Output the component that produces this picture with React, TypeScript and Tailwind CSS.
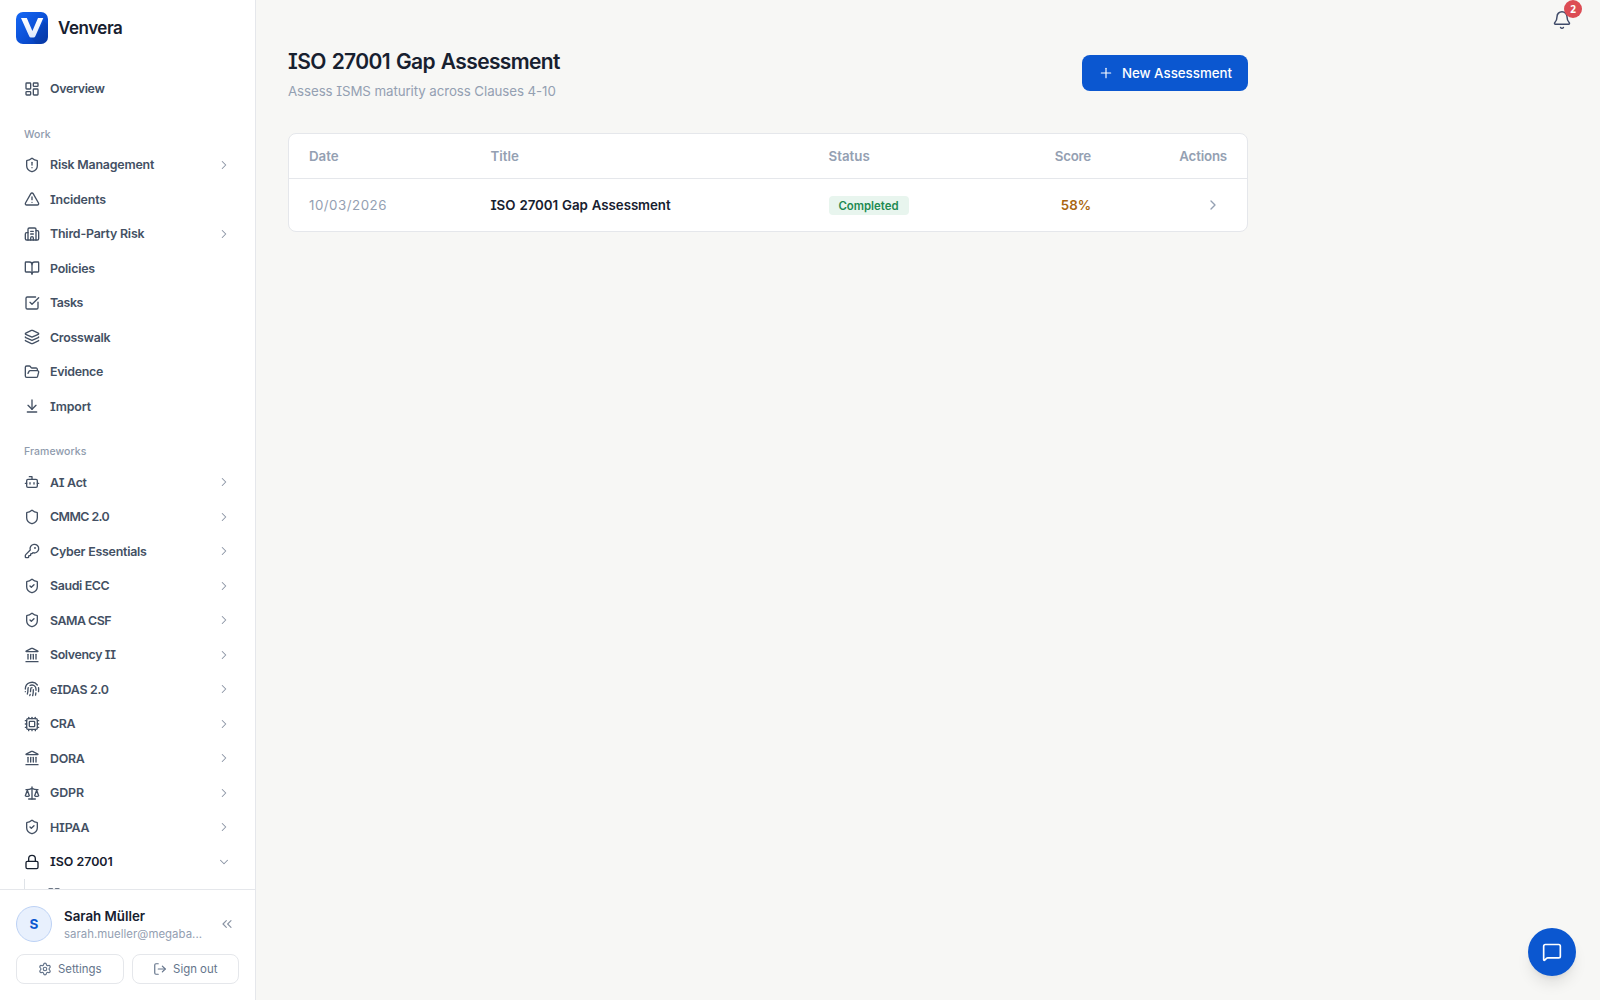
import React from 'react';
import {
  ArrowDownToLine,
  Bell,
  BookOpen,
  Bot,
  Building2,
  ChevronDown,
  ChevronRight,
  ChevronsLeft,
  Cpu,
  Fingerprint,
  FolderOpen,
  KeyRound,
  Landmark,
  Layers,
  LayoutDashboard,
  Lock,
  LogOut,
  MessageSquare,
  Plus,
  Scale,
  Settings,
  Shield,
  ShieldAlert,
  ShieldCheck,
  SquareCheckBig,
  TriangleAlert,
  type LucideIcon,
} from 'lucide-react';

type NavEntry = {
  label: string;
  icon: LucideIcon;
  spacing: string;
  expandable?: boolean;
  open?: boolean;
};

const workItems: NavEntry[] = [
  { label: 'Risk Management', icon: ShieldAlert, spacing: 'tracking-[-0.016em]', expandable: true },
  { label: 'Incidents', icon: TriangleAlert, spacing: 'tracking-[-0.015em]' },
  { label: 'Third-Party Risk', icon: Building2, spacing: 'tracking-[-0.016em]', expandable: true },
  { label: 'Policies', icon: BookOpen, spacing: 'tracking-[-0.016em]' },
  { label: 'Tasks', icon: SquareCheckBig, spacing: 'tracking-[-0.034em]' },
  { label: 'Crosswalk', icon: Layers, spacing: 'tracking-[-0.022em]' },
  { label: 'Evidence', icon: FolderOpen, spacing: 'tracking-[-0.022em]' },
  { label: 'Import', icon: ArrowDownToLine, spacing: 'tracking-[-0.01em]' },
];

const frameworkItems: NavEntry[] = [
  { label: 'AI Act', icon: Bot, spacing: 'tracking-[-0.022em]', expandable: true },
  { label: 'CMMC 2.0', icon: Shield, spacing: 'tracking-[-0.046em]', expandable: true },
  { label: 'Cyber Essentials', icon: KeyRound, spacing: 'tracking-[-0.019em]', expandable: true },
  { label: 'Saudi ECC', icon: ShieldCheck, spacing: 'tracking-[-0.03em]', expandable: true },
  { label: 'SAMA CSF', icon: ShieldCheck, spacing: 'tracking-[-0.04em]', expandable: true },
  { label: 'Solvency II', icon: Landmark, spacing: 'tracking-[-0.031em]', expandable: true },
  { label: 'eIDAS 2.0', icon: Fingerprint, spacing: 'tracking-[-0.021em]', expandable: true },
  { label: 'CRA', icon: Cpu, spacing: 'tracking-[-0.033em]', expandable: true },
  { label: 'DORA', icon: Landmark, spacing: 'tracking-[-0.022em]', expandable: true },
  { label: 'GDPR', icon: Scale, spacing: 'tracking-[-0.006em]', expandable: true },
  { label: 'HIPAA', icon: ShieldCheck, spacing: 'tracking-[-0.012em]', expandable: true },
  { label: 'ISO 27001', icon: Lock, spacing: 'tracking-[0em]', expandable: true, open: true },
];

const NavRow: React.FC<{ item: NavEntry }> = ({ item }) => {
  const Icon = item.icon;
  const Chevron = item.open ? ChevronDown : ChevronRight;
  return (
    <a
      className={`flex h-[33.5px] shrink-0 items-center gap-2.5 rounded-md px-3 text-[12.4px] font-semibold ${
        item.open ? 'text-[#17202f]' : 'text-[#435063]'
      }`}
    >
      <Icon size={16} strokeWidth={2} className="shrink-0" />
      <span className={`flex-1 pt-0.5 whitespace-nowrap ${item.spacing}`}>{item.label}</span>
      {item.expandable && <Chevron size={14} strokeWidth={1.8} className="shrink-0 text-[#8a94a4]" />}
    </a>
  );
};

const NavSection: React.FC<{ title: string; items: NavEntry[] }> = ({ title, items }) => (
  <div className="mt-4 flex flex-col gap-px">
    <div className="flex h-[25.5px] items-start px-3 pt-[5px] text-[10.5px] leading-[16.5px] font-medium tracking-[0.005em] text-[#8f9bad]">
      {title}
    </div>
    {items.map((item) => (
      <NavRow key={item.label} item={item} />
    ))}
  </div>
);

const Logo: React.FC = () => (
  <svg width="32" height="32" viewBox="0 0 32 32">
    <defs>
      <linearGradient id="logoBg" x1="0" y1="0" x2="1" y2="1">
        <stop offset="0" stopColor="#1668f5" />
        <stop offset="0.55" stopColor="#0a4fd6" />
        <stop offset="1" stopColor="#0638a8" />
      </linearGradient>
      <linearGradient id="logoMark" x1="0" y1="0" x2="0" y2="1">
        <stop offset="0" stopColor="#ffffff" />
        <stop offset="1" stopColor="#dfe9fb" />
      </linearGradient>
    </defs>
    <rect width="32" height="32" rx="7" fill="url(#logoBg)" />
    <path d="M15 25.5h4L28 9l3.5 4V25a7 7 0 0 1-7 7h-4z" fill="#06338f" opacity="0.25" />
    <path d="M5 6h5.8l5.6 13L22 6h5.3l-8 18.3q-.6 1.2-1.8 1.2h-2.6q-1.2 0-1.7-1.2z" fill="url(#logoMark)" />
  </svg>
);

const Sidebar: React.FC = () => (
  <aside className="flex w-64 shrink-0 flex-col border-r border-[#e5e7eb] bg-white">
    <div className="flex h-14 shrink-0 items-center gap-2.5 px-4">
      <Logo />
      <span className="pt-0.5 text-[17px] font-semibold tracking-[-0.028em] text-[#17202f]">Venvera</span>
    </div>

    <nav className="flex min-h-0 flex-1 flex-col overflow-hidden px-3 pt-4">
      <NavRow item={{ label: 'Overview', icon: LayoutDashboard, spacing: 'tracking-[-0.026em]' }} />
      <NavSection title="Work" items={workItems} />
      <NavSection title="Frameworks" items={frameworkItems} />
      <div className="ml-3 shrink-0 border-l border-[#dfe3e8] pl-2.5">
        <div className="flex h-[30px] items-center gap-[7px] px-3 text-[11.5px] font-medium text-[#3c4a5e]">
          <LayoutDashboard size={14} strokeWidth={2} />
          <span className="pt-0.5">Dashboard</span>
        </div>
      </div>
    </nav>

    <div className="shrink-0 border-t border-[#e5e7eb] p-4">
      <div className="flex items-center gap-3">
        <div className="flex size-9 shrink-0 items-center justify-center rounded-full border border-[#bdd2f5] bg-[#e8f0fd] text-[13.5px] font-bold text-[#0b57d0]">
          S
        </div>
        <div className="min-w-0 flex-1">
          <div className="text-[13.3px] leading-[19px] font-semibold text-[#17202f]">Sarah Müller</div>
          <div className="-mb-px text-[11.4px] leading-[17px] tracking-[0.003em] whitespace-nowrap text-[#94a0b2]">
            sarah.mueller@megaba...
          </div>
        </div>
        <ChevronsLeft size={16} strokeWidth={1.75} className="mr-1 shrink-0 text-[#8a94a4]" />
      </div>
      <div className="mt-3 flex gap-2">
        <button className="flex h-[30px] flex-1 items-center justify-center gap-1.5 rounded-lg border border-[#e5e7eb] text-[11.4px] text-[#64748b]">
          <Settings size={14} strokeWidth={2} />
          <span className="pt-0.5">Settings</span>
        </button>
        <button className="flex h-[30px] flex-1 items-center justify-center gap-1.5 rounded-lg border border-[#e5e7eb] text-[11.4px] text-[#64748b]">
          <LogOut size={14} strokeWidth={2} />
          <span className="pt-0.5">Sign out</span>
        </button>
      </div>
    </div>
  </aside>
);

const AssessmentTable: React.FC = () => (
  <div className="mt-8 overflow-hidden rounded-lg border border-[#e5e7eb] bg-white">
    <table className="w-full table-fixed text-[13.3px]">
      <colgroup>
        <col className="w-[181.5px]" />
        <col className="w-[338px]" />
        <col className="w-[180px]" />
        <col className="w-[122.5px]" />
        <col className="w-[136px]" />
      </colgroup>
      <thead>
        <tr className="h-[44px] border-b border-[#e5e7eb] text-left text-[#94a0b2]">
          <th className="px-5 pt-0.5 font-semibold">Date</th>
          <th className="px-5 pt-0.5 font-semibold">Title</th>
          <th className="px-5 pt-0.5 font-semibold">Status</th>
          <th className="px-5 pt-0.5 text-right font-semibold tracking-[-0.017em]">Score</th>
          <th className="px-5 pt-0.5 text-right font-semibold tracking-[-0.013em]">Actions</th>
        </tr>
      </thead>
      <tbody>
        <tr className="h-[53px]">
          <td className="px-5 pt-0.5 tracking-[0.038em] text-[#94a0b2]">10/03/2026</td>
          <td className="px-5 pt-0.5 font-semibold tracking-[-0.005em] [word-spacing:0.8px] text-[#17202f]">
            ISO 27001 Gap Assessment
          </td>
          <td className="px-5 pt-px">
            <span className="flex h-[19px] w-20 items-center justify-center rounded bg-[#e8f5ee] pt-0.5 text-[11.4px] font-semibold text-[#1f8a52]">
              Completed
            </span>
          </td>
          <td className="px-5 pt-0.5 text-right font-semibold text-[#a9650f]">58%</td>
          <td className="px-5">
            <ChevronRight size={16} strokeWidth={2} className="mr-1.5 ml-auto text-[#94a0b2]" />
          </td>
        </tr>
      </tbody>
    </table>
  </div>
);

const App: React.FC = () => {
  return (
    <div className="flex h-screen w-full overflow-hidden bg-[#f7f7f5] font-['Inter',sans-serif] [font-feature-settings:'cv08']">
      <Sidebar />

      <main className="relative min-w-0 flex-1">
        <div className="max-w-[1024px] px-8 pt-[47px]">
          <div className="flex items-start justify-between">
            <div>
              <h1 className="text-[21px] leading-[30px] font-semibold tracking-[-0.03em] [word-spacing:1.3px] text-[#17202f]">
                ISO 27001 Gap Assessment
              </h1>
              <p className="mt-1 text-[13.3px] leading-[20px] tracking-[-0.006em] text-[#94a0b2]">
                Assess ISMS maturity across Clauses 4-10
              </p>
            </div>
            <button className="mt-2 flex h-9 w-[166px] items-center justify-center gap-2 rounded-lg bg-[#0b57d0] text-[13.3px] font-medium text-white">
              <Plus size={16} strokeWidth={1.75} />
              <span className="pt-px">New Assessment</span>
            </button>
          </div>
          <AssessmentTable />
        </div>

        {/* Notifications */}
        <button className="absolute top-2.5 right-7 text-[#3f4a68]">
          <Bell size={20} strokeWidth={1.75} />
          <span className="absolute -top-2.5 left-3 flex size-[18px] items-center justify-center rounded-full bg-[#dc4c54] font-['Noto_Sans',sans-serif] text-[10px] font-bold text-white">
            2
          </span>
        </button>

        {/* Chat launcher */}
        <button className="absolute right-6 bottom-6 flex size-12 items-center justify-center rounded-full bg-[#0b57d0] text-white shadow-lg shadow-black/10">
          <MessageSquare size={20} strokeWidth={2} />
        </button>
      </main>
    </div>
  );
};

export default App;
